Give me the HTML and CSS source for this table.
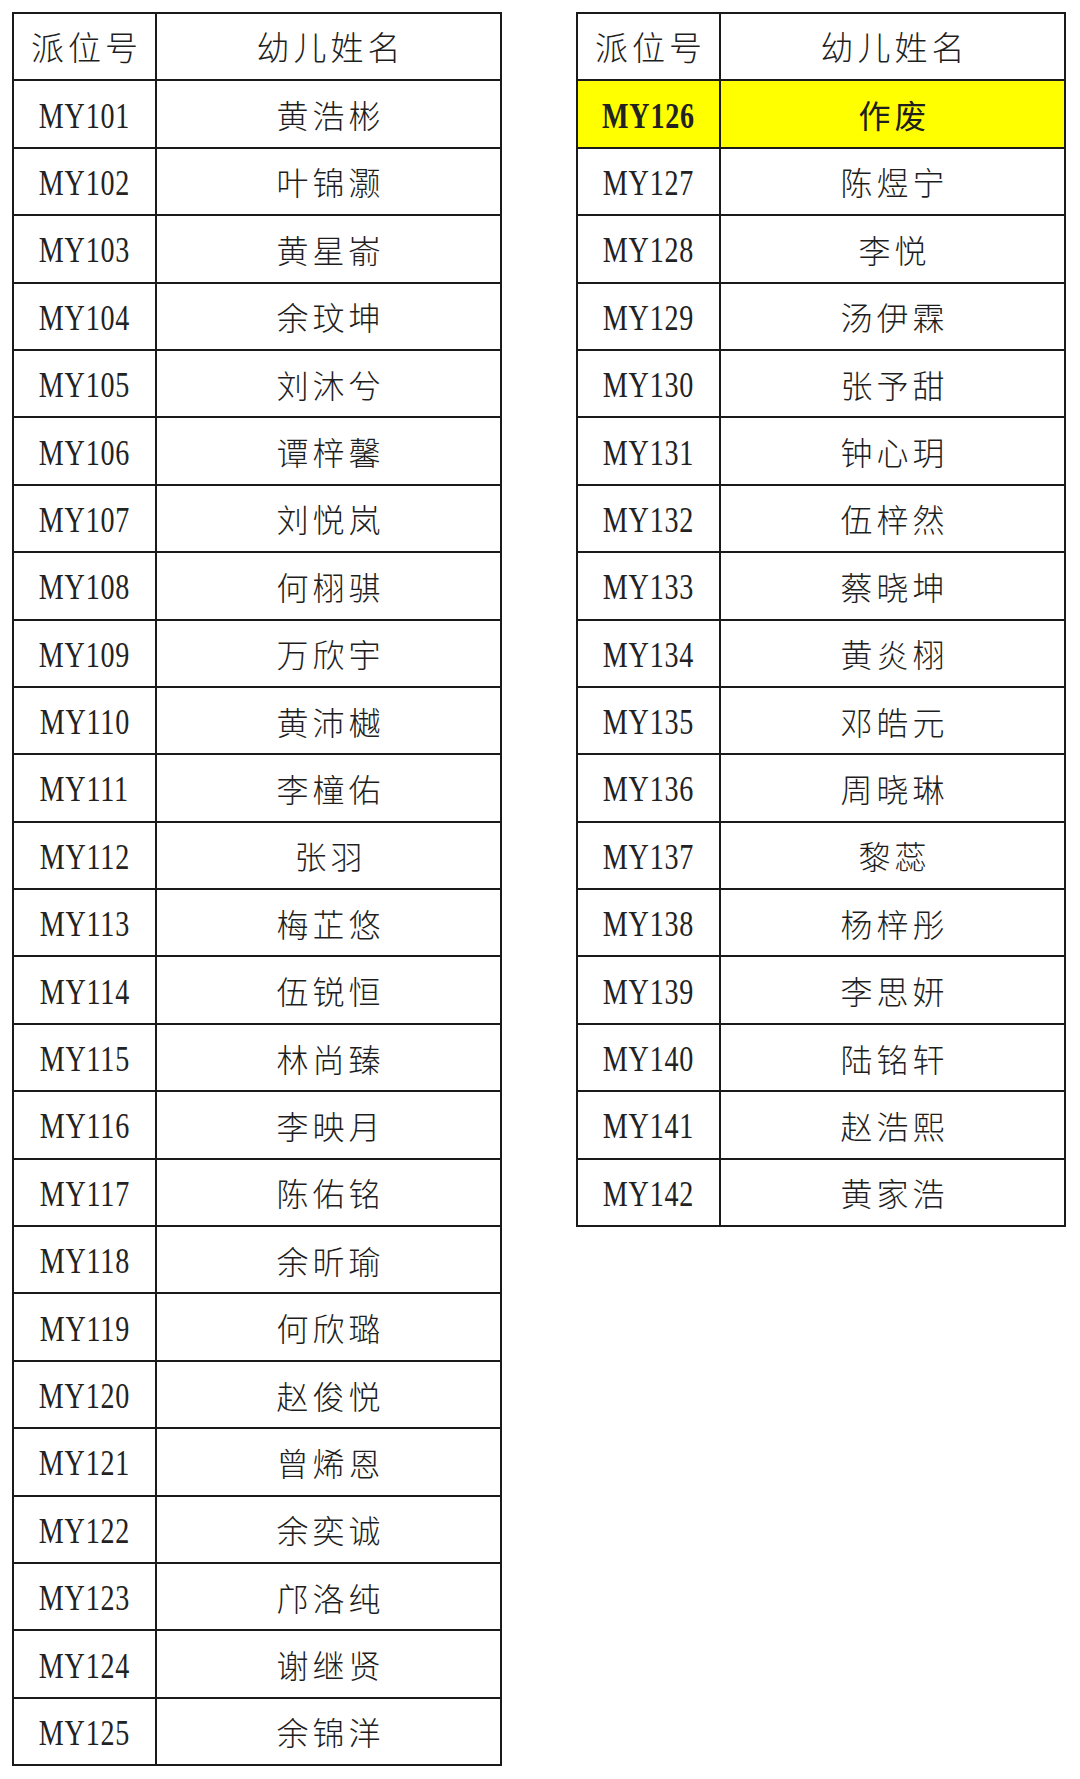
FILE: index.html
```html
<!DOCTYPE html>
<html lang="zh-CN">
<head>
<meta charset="utf-8">
<title>派位名单</title>
<link rel="stylesheet" href="styles.css">
</head>
<body>
<div class="page">
  <table class="roster">
    <thead>
      <tr><th class="c-id">派位号</th><th class="c-name">幼儿姓名</th></tr>
    </thead>
    <tbody>
      <tr><td class="c-id"><span class="id">MY101</span></td><td class="c-name">黄浩彬</td></tr>
      <tr><td class="c-id"><span class="id">MY102</span></td><td class="c-name">叶锦灏</td></tr>
      <tr><td class="c-id"><span class="id">MY103</span></td><td class="c-name">黄星嵛</td></tr>
      <tr><td class="c-id"><span class="id">MY104</span></td><td class="c-name">余玟坤</td></tr>
      <tr><td class="c-id"><span class="id">MY105</span></td><td class="c-name">刘沐兮</td></tr>
      <tr><td class="c-id"><span class="id">MY106</span></td><td class="c-name">谭梓馨</td></tr>
      <tr><td class="c-id"><span class="id">MY107</span></td><td class="c-name">刘悦岚</td></tr>
      <tr><td class="c-id"><span class="id">MY108</span></td><td class="c-name">何栩骐</td></tr>
      <tr><td class="c-id"><span class="id">MY109</span></td><td class="c-name">万欣宇</td></tr>
      <tr><td class="c-id"><span class="id">MY110</span></td><td class="c-name">黄沛樾</td></tr>
      <tr><td class="c-id"><span class="id">MY111</span></td><td class="c-name">李橦佑</td></tr>
      <tr><td class="c-id"><span class="id">MY112</span></td><td class="c-name">张羽</td></tr>
      <tr><td class="c-id"><span class="id">MY113</span></td><td class="c-name">梅芷悠</td></tr>
      <tr><td class="c-id"><span class="id">MY114</span></td><td class="c-name">伍锐恒</td></tr>
      <tr><td class="c-id"><span class="id">MY115</span></td><td class="c-name">林尚臻</td></tr>
      <tr><td class="c-id"><span class="id">MY116</span></td><td class="c-name">李映月</td></tr>
      <tr><td class="c-id"><span class="id">MY117</span></td><td class="c-name">陈佑铭</td></tr>
      <tr><td class="c-id"><span class="id">MY118</span></td><td class="c-name">余昕瑜</td></tr>
      <tr><td class="c-id"><span class="id">MY119</span></td><td class="c-name">何欣璐</td></tr>
      <tr><td class="c-id"><span class="id">MY120</span></td><td class="c-name">赵俊悦</td></tr>
      <tr><td class="c-id"><span class="id">MY121</span></td><td class="c-name">曾烯恩</td></tr>
      <tr><td class="c-id"><span class="id">MY122</span></td><td class="c-name">余奕诚</td></tr>
      <tr><td class="c-id"><span class="id">MY123</span></td><td class="c-name">邝洛纯</td></tr>
      <tr><td class="c-id"><span class="id">MY124</span></td><td class="c-name">谢继贤</td></tr>
      <tr><td class="c-id"><span class="id">MY125</span></td><td class="c-name">余锦洋</td></tr>
    </tbody>
  </table>
  <table class="roster">
    <thead>
      <tr><th class="c-id">派位号</th><th class="c-name">幼儿姓名</th></tr>
    </thead>
    <tbody>
      <tr class="void"><td class="c-id"><span class="id">MY126</span></td><td class="c-name">作废</td></tr>
      <tr><td class="c-id"><span class="id">MY127</span></td><td class="c-name">陈煜宁</td></tr>
      <tr><td class="c-id"><span class="id">MY128</span></td><td class="c-name">李悦</td></tr>
      <tr><td class="c-id"><span class="id">MY129</span></td><td class="c-name">汤伊霖</td></tr>
      <tr><td class="c-id"><span class="id">MY130</span></td><td class="c-name">张予甜</td></tr>
      <tr><td class="c-id"><span class="id">MY131</span></td><td class="c-name">钟心玥</td></tr>
      <tr><td class="c-id"><span class="id">MY132</span></td><td class="c-name">伍梓然</td></tr>
      <tr><td class="c-id"><span class="id">MY133</span></td><td class="c-name">蔡晓坤</td></tr>
      <tr><td class="c-id"><span class="id">MY134</span></td><td class="c-name">黄炎栩</td></tr>
      <tr><td class="c-id"><span class="id">MY135</span></td><td class="c-name">邓皓元</td></tr>
      <tr><td class="c-id"><span class="id">MY136</span></td><td class="c-name">周晓琳</td></tr>
      <tr><td class="c-id"><span class="id">MY137</span></td><td class="c-name">黎蕊</td></tr>
      <tr><td class="c-id"><span class="id">MY138</span></td><td class="c-name">杨梓彤</td></tr>
      <tr><td class="c-id"><span class="id">MY139</span></td><td class="c-name">李思妍</td></tr>
      <tr><td class="c-id"><span class="id">MY140</span></td><td class="c-name">陆铭轩</td></tr>
      <tr><td class="c-id"><span class="id">MY141</span></td><td class="c-name">赵浩熙</td></tr>
      <tr><td class="c-id"><span class="id">MY142</span></td><td class="c-name">黄家浩</td></tr>
    </tbody>
  </table>
</div>
</body>
</html>
```

FILE: styles.css
```css
html, body {
  margin: 0;
  padding: 0;
  background: #ffffff;
}

body {
  width: 1080px;
  height: 1779px;
  overflow: hidden;
  color: #1e1e1e;
  font-family: "Noto Sans CJK SC", "Noto Sans CJK TC", sans-serif;
}

.page {
  display: flex;
  align-items: flex-start;
  gap: 74px;
  padding: 12px 0 0 12px;
}

.roster {
  border-collapse: collapse;
  table-layout: fixed;
  width: 490px;
  border: 2px solid #1a1a1a;
}

.roster tr {
  height: 67.4px;
}

.roster th,
.roster td {
  border: 2px solid #1a1a1a;
  padding: 0;
  text-align: center;
  vertical-align: middle;
  font-weight: 300;
}

.roster th {
  font-size: 33px;
  letter-spacing: 4px;
  text-indent: 4px;
  line-height: 1;
}

.c-id {
  width: 141px;
}

.c-name {
  font-size: 32px;
  letter-spacing: 4px;
  text-indent: 4px;
  line-height: 1;
}

.id {
  display: inline-block;
  font-family: "Liberation Serif", "DejaVu Serif", serif;
  font-size: 36px;
  line-height: 1;
  letter-spacing: 1px;
  transform: scaleX(0.78);
  color: #222222;
  padding-top: 3px;
}

.void td {
  background: #ffff00;
}

.void .id {
  font-weight: 700;
}

.void .c-name {
  font-weight: 400;
}
```
